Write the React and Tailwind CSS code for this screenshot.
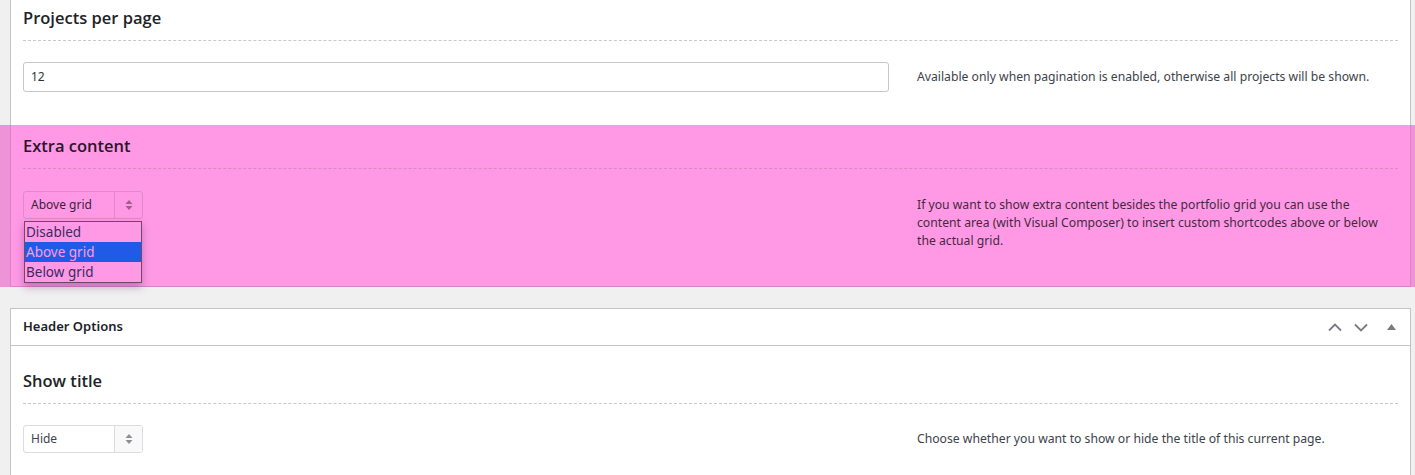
const SelectArrows = ({ className = '' }) => (
  <svg className={className} width="8" height="12" viewBox="0 0 8 12" fill="currentColor">
    <path d="M4 1 L7.5 5 L0.5 5 Z" />
    <path d="M4 11 L7.5 7 L0.5 7 Z" />
  </svg>
);

const FakeSelect = ({ value, tinted = false }) => (
  <div
    className={
      'flex h-[28px] w-[120px] rounded-[3px] border text-[12px] ' +
      (tinted ? 'border-[#e08acd] bg-[#ff99e6] text-[#3a1f3a]' : 'border-[#dcdcde] bg-white text-[#3c434a]')
    }
  >
    <div className="flex flex-1 items-center pl-[7px]">{value}</div>
    <div
      className={
        'flex w-[28px] items-center justify-center border-l ' +
        (tinted ? 'border-[#e08acd] text-[#9a5f8d]' : 'border-[#dcdcde] bg-[#f9f9f9] text-[#8c8f94]')
      }
    >
      <SelectArrows />
    </div>
  </div>
);

const Heading = ({ children, tinted = false }) => (
  <div className={'pt-[8px] pb-[12px] border-b border-dashed ' + (tinted ? 'border-[#d78ac4]' : 'border-[#c9c9c9]')}>
    <h2
      className={
        "font-['Open_Sans',sans-serif] text-[16.5px] font-semibold leading-[20px] " +
        (tinted ? 'text-[#2a1628]' : 'text-[#1d2327]')
      }
    >
      {children}
    </h2>
  </div>
);

export default function App() {
  return (
    <div className="min-h-[475px] w-full bg-[#f0f0f1] font-['Noto_Sans',sans-serif] text-[#1d2327]">
      {/* Projects per page */}
      <div className="ml-[10px] mr-[4px] border-x border-[#c3c4c7] bg-white px-[12px] pb-[33px]">
        <Heading>Projects per page</Heading>
        <div className="flex items-center pt-[21px]">
          <div className="flex h-[30px] w-[866px] items-center rounded-[3px] border border-[#c7c7c7] px-[7px] text-[12px] text-[#2c3338]">
            12
          </div>
          <p className="ml-[28px] text-[12.2px] text-[#3c434a]">
            Available only when pagination is enabled, otherwise all projects will be shown.
          </p>
        </div>
      </div>

      {/* Extra content (highlighted) */}
      <div className="bg-[#ef93d8]">
        <div className="ml-[10px] mr-[4px] h-[162px] border-x border-b border-[#d883c6] bg-[#ff99e6] px-[12px] pt-[3px]">
          <Heading tinted>Extra content</Heading>
          <div className="flex items-start pt-[22px]">
            <div className="relative w-[866px]">
              <FakeSelect value="Above grid" tinted />
              <div className="absolute left-[1px] top-[30px] w-[118px] border border-[#6e4a68] bg-[#ff99e6] text-[13.5px] leading-[20px] text-[#3a2a5e] shadow-[0_4px_8px_rgba(90,30,80,0.35)]">
                <div className="pl-[1px]">Disabled</div>
                <div className="bg-[#1f5be6] pl-[1px] text-[#ff99e6]">Above grid</div>
                <div className="pl-[1px]">Below grid</div>
              </div>
            </div>
            <p className="ml-[28px] mt-[5px] w-[470px] text-[12.2px] leading-[18px] text-[#3f2a3e]">
              If you want to show extra content besides the portfolio grid you can use the content area (with Visual Composer) to insert custom shortcodes above or below the actual grid.
            </p>
          </div>
        </div>
      </div>

      {/* Header Options */}
      <div className="ml-[10px] mr-[4px] mt-[21px] border border-[#c3c4c7] bg-white">
        <div className="flex h-[37px] items-center justify-between border-b border-[#c3c4c7] pl-[12px] pr-[14px]">
          <h3 className="text-[13px] font-semibold text-[#1d2327]">Header Options</h3>
          <div className="flex items-center text-[#787c82]">
            <svg width="14" height="9" viewBox="0 0 14 9" fill="none" stroke="currentColor" strokeWidth="1.8">
              <path d="M1 7.5 L7 1.5 L13 7.5" />
            </svg>
            <svg className="ml-[12px]" width="14" height="9" viewBox="0 0 14 9" fill="none" stroke="currentColor" strokeWidth="1.8">
              <path d="M1 1.5 L7 7.5 L13 1.5" />
            </svg>
            <svg className="ml-[19px]" width="9" height="6" viewBox="0 0 9 6" fill="currentColor">
              <path d="M4.5 0 L9 6 L0 6 Z" />
            </svg>
          </div>
        </div>
        <div className="px-[12px]">
          <div className="pt-[17px]">
            <Heading>Show title</Heading>
          </div>
          <div className="flex items-center pt-[21px] pb-[30px]">
            <div className="w-[866px]">
              <FakeSelect value="Hide" />
            </div>
            <p className="ml-[28px] text-[12.2px] text-[#3c434a]">
              Choose whether you want to show or hide the title of this current page.
            </p>
          </div>
        </div>
      </div>
    </div>
  );
}
